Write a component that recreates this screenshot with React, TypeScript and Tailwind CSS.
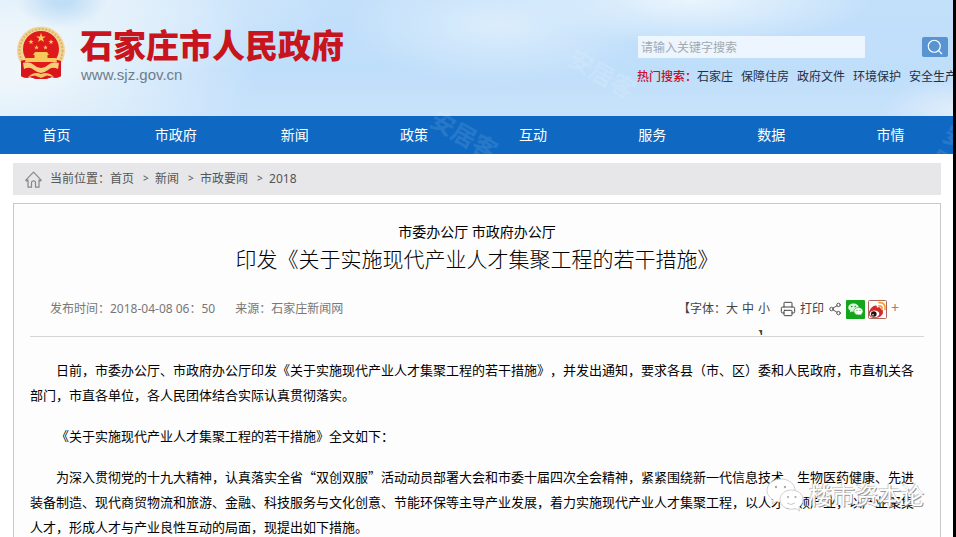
import { Printer, Search, Share2 } from "lucide-react";

const navItems = ["首页", "市政府", "新闻", "政策", "互动", "服务", "数据", "市情"];
const hotWords = ["石家庄", "保障住房", "政府文件", "环境保护", "安全生产"];
const crumbs = ["首页", "新闻", "市政要闻", "2018"];

const paragraphs = [
  "日前，市委办公厅、市政府办公厅印发《关于实施现代产业人才集聚工程的若干措施》，并发出通知，要求各县（市、区）委和人民政府，市直机关各部门，市直各单位，各人民团体结合实际认真贯彻落实。",
  "《关于实施现代产业人才集聚工程的若干措施》全文如下：",
  "为深入贯彻党的十九大精神，认真落实全省“双创双服”活动动员部署大会和市委十届四次全会精神，紧紧围绕新一代信息技术、生物医药健康、先进装备制造、现代商贸物流和旅游、金融、科技服务与文化创意、节能环保等主导产业发展，着力实施现代产业人才集聚工程，以人才引领产业，以产业聚集人才，形成人才与产业良性互动的局面，现提出如下措施。",
];

const STAR = "M0 -5 L1.2 -1.6 L4.8 -1.5 L1.9 0.6 L2.9 4 L0 2 L-2.9 4 L-1.9 0.6 L-4.8 -1.5 L-1.2 -1.6 Z";

const Emblem = () => (
  <svg viewBox="0 0 50 54" className="h-[54px] w-[50px] shrink-0" aria-hidden="true">
    <path d="M5 34 L5 50 Q9 53 14 51 L20 53 L30 53 L36 51 Q41 53 45 50 L45 34 Z" fill="#d8161b" />
    <circle cx="25" cy="24.500" r="24" fill="#f1d596" />
    <circle cx="25" cy="24.500" r="21.500" fill="none" stroke="#dcb565" strokeWidth="2" strokeDasharray="2 1.5" />
    <path d="M5 35 Q12 32 17 38 L33 38 Q38 32 45 35 L45 50 Q41 53 36 51 L30 53 L20 53 L14 51 Q9 53 5 50 Z" fill="#d8161b" />
    <circle cx="25" cy="23" r="18" fill="#df1a1c" />
    <g fill="#f6c95a">
      <path d={STAR} transform="translate(25 12)" />
      <path d={STAR} transform="translate(15 16) scale(.55)" />
      <path d={STAR} transform="translate(35 16) scale(.55)" />
      <path d={STAR} transform="translate(20.5 21.5) scale(.5)" />
      <path d={STAR} transform="translate(29.5 21.5) scale(.5)" />
      <path d="M19 26 L31 26 L33 29 L31.5 29 L31.5 32 L40 32 L41 36 L9 36 L10 32 L18.500 32 L18.500 29 L17 29 Z" />
    </g>
    <path d="M7 37 Q14 35 18 39 Q21 42 25 42 Q29 42 32 39 Q36 35 43 37 L42 43 Q36 40 32 44 Q28 47 25 47 Q22 47 18 44 Q14 40 8 43 Z" fill="#f3cf77" />
    <path d="M12 51 Q18 45 25 48 Q32 45 38 51 L31 49.500 L25 52 L19 49.500 Z" fill="#f0c568" />
  </svg>
);

const HomeIcon = () => (
  <svg viewBox="0 0 17 17" className="mr-2 size-[17px]" fill="none" stroke="#888" strokeWidth="1.200" strokeLinejoin="round" aria-hidden="true">
    <path d="M.8 9.200 8.500 1.200l7.700 8-1 .8-1.200-1.200v7.400h-3.500v-4.400a2 2 0 0 0-4 0v4.400H3V8.800L1.800 10z" />
  </svg>
);

const WechatIcon = () => (
  <svg viewBox="0 0 19 19" className="size-[19px]" aria-hidden="true">
    <rect width="19" height="19" rx="1" fill="#12a71b" />
    <path d="M7.500 3.500c3 0 5.300 1.800 5.300 4.100s-2.300 4.100-5.300 4.100c-.6 0-1.100-.1-1.600-.2L3.800 12.600l.5-2C3 9.900 2.200 8.800 2.200 7.600c0-2.300 2.300-4.100 5.300-4.100z" fill="#d9f5da" />
    <path d="M12.400 7.600c2.600 0 4.600 1.600 4.600 3.700 0 1.100-.6 2-1.500 2.700l.4 1.700-1.900-.9c-.5.1-1 .2-1.600.2-2.500 0-4.500-1.600-4.500-3.700s2-3.700 4.500-3.700z" fill="#fff" stroke="#12a71b" strokeWidth=".6" />
    <g fill="#12a71b">
      <circle cx="5.700" cy="6.500" r=".8" />
      <circle cx="9.200" cy="6.500" r=".8" />
      <circle cx="11" cy="10.300" r=".6" />
      <circle cx="14" cy="10.300" r=".6" />
    </g>
  </svg>
);

const WeiboIcon = () => (
  <svg viewBox="0 0 19 19" className="size-[19px]" aria-hidden="true">
    <rect x=".5" y=".5" width="18" height="18" rx="1" fill="#fff" stroke="#b5655a" />
    <path d="M1 12C2 8.500 5.500 5 8 5.500c1.200.3 1 1.600.8 2.300 2-.8 4.200-.7 3.900 1.300 2 .5 2.300 1.700 2.300 3 0 3.300-3.500 5.900-8 5.900-3.500 0-6-1.500-6-4z" fill="#d7292b" />
    <ellipse cx="6.500" cy="13.800" rx="4.800" ry="3.400" fill="#fff" />
    <circle cx="5.800" cy="14" r="2.800" fill="#1a1414" />
    <circle cx="5" cy="14.700" r=".8" fill="#fff" />
    <path d="M11 5.800c2-.4 3.500 1.200 3 3.200M11 2.700c4-.7 7 2.600 6 6.800" fill="none" stroke="#f0a02c" strokeWidth="1.700" strokeLinecap="round" />
  </svg>
);

const BubblesLogo = () => (
  <svg viewBox="0 0 40 36" className="h-9 w-10" aria-hidden="true">
    <g fill="#fff" stroke="#c4c4c4" strokeWidth=".8">
      <path d="M15 2c8 0 14 5 14 11.500S23 25 15 25c-1.500 0-3-.2-4.300-.6L6 27l1.200-4.200C3.500 20.700 1 17.300 1 13.500 1 7 7 2 15 2z" />
      <path d="M25.500 13C32 13 37 17.200 37 22.600c0 3-1.600 5.700-4.200 7.400l1 4-4.200-2.400c-1.300.4-2.700.6-4.100.6C19 32.200 14 28 14 22.600S19 13 25.500 13z" />
    </g>
    <g fill="#aaa">
      <circle cx="10" cy="10" r="1.200" />
      <circle cx="19" cy="10" r="1.200" />
      <circle cx="22" cy="20" r="1.100" />
      <circle cx="29.500" cy="20" r="1.100" />
    </g>
    <path d="M21 26q4 3 8 0" fill="none" stroke="#bbb" strokeWidth=".8" />
  </svg>
);

const Header = () => (
  <header className="flex h-[116px] shrink-0 justify-between overflow-hidden bg-[#c5e0fa] bg-[radial-gradient(ellipse_45px_28px_at_62px_0,#c0def6_20%,transparent),radial-gradient(ellipse_260px_130px_at_0_60px,#eef6fb_20%,transparent),radial-gradient(ellipse_220px_80px_at_110px_0,#dcedfb,transparent),radial-gradient(ellipse_150px_60px_at_500px_25px,#dbedfc,transparent),radial-gradient(ellipse_180px_45px_at_690px_0,#eaf5fd,transparent),radial-gradient(ellipse_70px_30px_at_100%_110px,#e0edfa,transparent),linear-gradient(#c3e0fa,#bfdefa_60%,#c8e2fb)] pl-4">
    <div className="flex gap-[14px] pt-[26px]">
      <Emblem />
      <div>
        <h1 className="text-[33px] leading-10 font-black text-[#c8141c]">石家庄市人民政府</h1>
        <p className="pl-px font-['Liberation_Sans'] text-[15px] leading-[18px] text-[#6d7d8c]">www.sjz.gov.cn</p>
      </div>
    </div>

    <div className="w-[316px] shrink-0 pt-9">
      <form className="flex items-center justify-between pr-[5px]" onSubmit={(e) => e.preventDefault()}>
        <input
          type="text"
          aria-label="搜索"
          placeholder="请输入关键字搜索"
          className="ml-px h-[22px] w-[227px] bg-white/70 px-[3px] text-xs text-gray-700 placeholder:text-[#a3a9b0] focus:outline-none"
        />
        <button type="submit" aria-label="搜索" className="flex h-5 w-[26px] items-center justify-center rounded-xs bg-[#5994d2] text-white">
          <Search className="size-[18px]" strokeWidth={1.5} />
        </button>
      </form>
      <div className="mt-[9px] flex text-xs leading-5 whitespace-nowrap text-[#1d3048]">
        <span className="font-medium text-[#c8102a]">热门搜索：</span>
        <div className="flex gap-2">
          {hotWords.map((word) => (
            <a key={word} href="#">{word}</a>
          ))}
        </div>
      </div>
    </div>
  </header>
);

const ArticleTools = () => (
  <div className="flex items-start pt-1 text-xs leading-[18px] text-[#444]">
    <div className="flex h-[35px] w-[92px] flex-col justify-between overflow-hidden">
      <div className="flex whitespace-nowrap">
        <span>【字体：</span>
        <div className="flex gap-1">
          <button type="button">大</button>
          <button type="button">中</button>
          <button type="button">小</button>
        </div>
      </div>
      <span className="h-1 self-end leading-3">】</span>
    </div>
    <button type="button" className="ml-[10px] flex items-center gap-1">
      <Printer className="size-4" strokeWidth={1.5} />
      打印
    </button>
    <button type="button" aria-label="分享" className="ml-1 flex h-[18px] items-center">
      <Share2 className="size-[14px]" strokeWidth={1.5} />
    </button>
    <a href="#" aria-label="微信" className="ml-1"><WechatIcon /></a>
    <a href="#" aria-label="微博" className="ml-[3px]"><WeiboIcon /></a>
    <button type="button" className="ml-1 text-sm leading-4 text-[#888]">+</button>
  </div>
);

// faint diagonal stamps over the page
const Stamps = () => (
  <div aria-hidden="true" className="pointer-events-none absolute inset-x-0 top-0 h-[154px] overflow-hidden text-2xl leading-7 font-bold">
    <span className="absolute top-[121px] left-[428px] rotate-30 text-white/10">安居客</span>
    <span className="absolute top-[60px] left-[566px] rotate-30 text-white/15">安居客</span>
    <span className="absolute top-[120px] left-[930px] rotate-30 text-white/10">安居客</span>
  </div>
);

const App = () => {
  return (
    <div
      lang="zh-CN"
      className="relative flex h-screen flex-col overflow-hidden border-r-[3px] border-black bg-white font-['Noto_Sans','Noto_Sans_CJK_SC',sans-serif] [text-spacing-trim:space-all]"
    >
      <Header />

      <nav className="grid h-[38px] shrink-0 grid-cols-8 items-center bg-[#0f69c3] text-center text-sm text-white">
        {navItems.map((item) => (
          <a key={item} href="#" className="pr-1.5">{item}</a>
        ))}
      </nav>

      <div className="mr-3 ml-[13px] flex min-h-0 flex-1 flex-col">
        <div className="mt-[9px] flex h-8 shrink-0 items-center bg-[#e7e7e9] pl-3 text-xs text-[#555]">
          <HomeIcon />
          <span>当前位置：</span>
          {crumbs.map((crumb, i) => (
            <span key={crumb} className="flex items-center">
              {i > 0 && <span className="w-[21px] pl-[9px] text-[10px]">&gt;</span>}
              <a href="#">{crumb}</a>
            </span>
          ))}
        </div>

        <article className="mt-2 flex-1 border border-b-0 border-[#c9c9cd] bg-[#fdfdfd] px-4 pt-[17px]">
          <h2 className="text-center text-black">
            <span className="block text-sm leading-[22px]">市委办公厅 市政府办公厅</span>
            <span className="block text-[21px] leading-8 font-light">印发《关于实施现代产业人才集聚工程的若干措施》</span>
          </h2>

          <div className="mt-[21px] flex h-[41px] justify-between border-b border-[#d6d6d6] pr-[25px] pl-5">
            <p className="flex gap-5 pt-1 text-xs leading-[18px] text-[#777]">
              <span>发布时间：2018-04-08 06：50</span>
              <span>来源：石家庄新闻网</span>
            </p>
            <ArticleTools />
          </div>

          <div className="mt-5 space-y-4 pr-[7px] font-['Noto_Sans_CJK_SC',sans-serif] text-[13px] leading-[25px] text-black">
            {paragraphs.map((text) => (
              <p key={text} className="indent-[2em] break-all">{text}</p>
            ))}
          </div>
        </article>
      </div>

      <Stamps />

      <div className="absolute right-[29px] bottom-6 flex items-center gap-[3px]">
        <BubblesLogo />
        <span className="text-[23px] leading-8 text-white [text-shadow:1px_1px_0_#999,-1px_-1px_0_#ccc]">楼市资本论</span>
      </div>
    </div>
  );
};

export default App;
